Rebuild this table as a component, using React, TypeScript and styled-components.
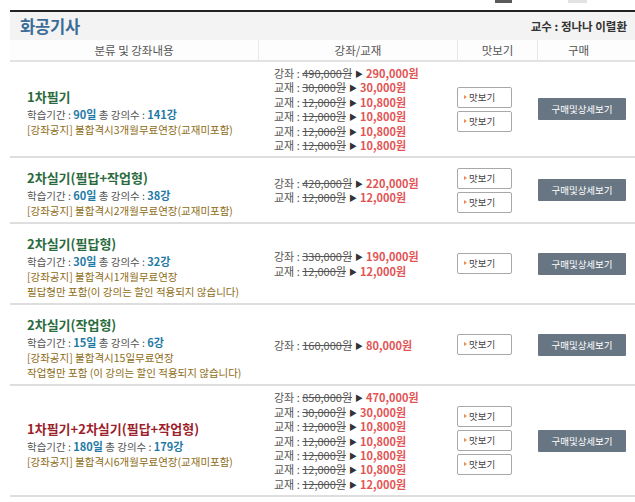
import React from "react";
import styled, { createGlobalStyle } from "styled-components";

const GlobalStyle = createGlobalStyle`
  html, body { margin: 0; padding: 0; background: #fff; }
  body { font-family: "Noto Sans CJK KR", "Noto Sans", sans-serif; }
  * { box-sizing: border-box; }
`;

const COLS = "248px 199px 80px 98px";

const Page = styled.div`
  width: 635px;
  padding-left: 10px;
`;

const TopStrip = styled.div`
  height: 10px;
  display: flex;
  align-items: flex-start;
`;

const TabStub = styled.div<{ $dark?: boolean; $left: number; $w: number }>`
  margin-left: ${(p) => p.$left}px;
  width: ${(p) => p.$w}px;
  height: 3px;
  background: ${(p) => (p.$dark ? "#5a5a5a" : "#e2e2e2")};
`;

const TitleBand = styled.div`
  border-top: 2px solid #222;
  background: #f3f3f3;
  height: 30px;
  display: flex;
  align-items: center;
  justify-content: space-between;
  padding: 0 8px 0 10px;
`;

const Title = styled.h1`
  margin: 0;
  font-size: 16.5px;
  font-weight: 700;
  color: #3b6c98;
  letter-spacing: -0.2px;
`;

const Prof = styled.div`
  font-size: 11.5px;
  font-weight: 700;
  color: #333;
`;

const HeaderRow = styled.div`
  display: grid;
  grid-template-columns: ${COLS};
  height: 22px;
  border-bottom: 2px solid #e3e3e3;
  background: #fdfdfd;
`;

const HeaderCell = styled.div<{ $first?: boolean; $padRight?: number }>`
  display: flex;
  align-items: center;
  justify-content: center;
  font-size: 11.5px;
  color: #555;
  padding-right: ${(p) => p.$padRight ?? 0}px;
  border-left: ${(p) => (p.$first ? "none" : "1px solid #e8e8e8")};
`;

const Row = styled.div`
  display: grid;
  grid-template-columns: ${COLS};
  border-bottom: 2px solid #dedede;
`;

const InfoCell = styled.div`
  display: flex;
  flex-direction: column;
  justify-content: center;
  padding: 10px 0 4px 17px;
`;

const CourseTitle = styled.div<{ $color: string }>`
  font-size: 13px;
  font-weight: 700;
  height: 20px;
  line-height: 20px;
  color: ${(p) => p.$color};
  white-space: nowrap;
`;

const InfoLine = styled.div`
  font-size: 10.5px;
  height: 15px;
  line-height: 15px;
  color: #555;
  white-space: nowrap;
`;

const NoticeLine = styled(InfoLine)`
  color: #8e6c16;
`;

const Value = styled.b`
  color: #1f7aa6;
  font-size: 11px;
  line-height: 0;
`;

const PriceCell = styled.div`
  display: flex;
  flex-direction: column;
  justify-content: center;
  padding: 4px 0 4px 16px;
`;

const PriceLine = styled.div`
  font-size: 11px;
  height: 14.4px;
  line-height: 14.4px;
  color: #555;
  white-space: nowrap;
`;

const OldPrice = styled.span`
  text-decoration: line-through;
  color: #555;
`;

const Arrow = styled.span`
  color: #333;
  font-size: 8px;
  line-height: 0;
  margin: 0 3px;
  vertical-align: 1px;
`;

const NewPrice = styled.span`
  color: #e25454;
  font-weight: 700;
`;

const PreviewCell = styled.div`
  display: flex;
  flex-direction: column;
  justify-content: center;
  align-items: flex-start;
  gap: 3px;
`;

const PreviewButton = styled.button`
  width: 55px;
  height: 21px;
  border: 1px solid #a8a8a8;
  border-radius: 2px;
  background: #fff;
  padding: 0 0 1px 6px;
  display: flex;
  align-items: center;
  gap: 2px;
  font-family: inherit;
  font-size: 9.5px;
  color: #444;
  cursor: pointer;

  &::before {
    content: "";
    width: 0;
    height: 0;
    border-top: 2.5px solid transparent;
    border-bottom: 2.5px solid transparent;
    border-left: 3px solid #f0894f;
  }
`;

const BuyCell = styled.div`
  display: flex;
  align-items: center;
  padding-left: 1px;
`;

const BuyButton = styled.button`
  width: 88px;
  height: 22px;
  border: none;
  border-radius: 1px;
  background: #687684;
  color: #fff;
  font-family: inherit;
  font-size: 9.5px;
  cursor: pointer;
`;

type Price = [string, string, string];

type Course = {
  title: string;
  color: string;
  days: string;
  count: string;
  notice: string;
  extra?: string;
  prices: Price[];
  previews: number;
};

const book12: Price = ["교재", "12,000원", "10,800원"];

const courses: Course[] = [
  {
    title: "1차필기",
    color: "#2a6b3d",
    days: "90일",
    count: "141강",
    notice: "[강좌공지] 불합격시3개월무료연장(교재미포함)",
    prices: [["강좌", "490,000원", "290,000원"], ["교재", "30,000원", "30,000원"], book12, book12, book12, book12],
    previews: 2,
  },
  {
    title: "2차실기(필답+작업형)",
    color: "#2a6b3d",
    days: "60일",
    count: "38강",
    notice: "[강좌공지] 불합격시2개월무료연장(교재미포함)",
    prices: [["강좌", "420,000원", "220,000원"], ["교재", "12,000원", "12,000원"]],
    previews: 2,
  },
  {
    title: "2차실기(필답형)",
    color: "#2a6b3d",
    days: "30일",
    count: "32강",
    notice: "[강좌공지] 불합격시1개월무료연장",
    extra: "필답형만 포함(이 강의는 할인 적용되지 않습니다)",
    prices: [["강좌", "330,000원", "190,000원"], ["교재", "12,000원", "12,000원"]],
    previews: 1,
  },
  {
    title: "2차실기(작업형)",
    color: "#2a6b3d",
    days: "15일",
    count: "6강",
    notice: "[강좌공지] 불합격시15일무료연장",
    extra: "작업형만 포함 (이 강의는 할인 적용되지 않습니다)",
    prices: [["강좌", "160,000원", "80,000원"]],
    previews: 1,
  },
  {
    title: "1차필기+2차실기(필답+작업형)",
    color: "#9c1f2d",
    days: "180일",
    count: "179강",
    notice: "[강좌공지] 불합격시6개월무료연장(교재미포함)",
    prices: [
      ["강좌", "850,000원", "470,000원"],
      ["교재", "30,000원", "30,000원"],
      book12,
      book12,
      book12,
      book12,
      ["교재", "12,000원", "12,000원"],
    ],
    previews: 3,
  },
];

export default function App() {
  return (
    <>
      <GlobalStyle />
      <Page>
        <TopStrip>
          <TabStub $dark $left={485} $w={17} />
          <TabStub $left={56} $w={19} />
        </TopStrip>
        <TitleBand>
          <Title>화공기사</Title>
          <Prof>교수 : 정나나 이렬환</Prof>
        </TitleBand>
        <HeaderRow>
          <HeaderCell $first>분류 및 강좌내용</HeaderCell>
          <HeaderCell>강좌/교재</HeaderCell>
          <HeaderCell>맛보기</HeaderCell>
          <HeaderCell $padRight={16}>구매</HeaderCell>
        </HeaderRow>
        {courses.map((c, i) => (
          <Row key={i}>
            <InfoCell>
              <CourseTitle $color={c.color}>{c.title}</CourseTitle>
              <InfoLine>
                학습기간 : <Value>{c.days}</Value> 총 강의수 : <Value>{c.count}</Value>
              </InfoLine>
              <NoticeLine>{c.notice}</NoticeLine>
              {c.extra && <NoticeLine>{c.extra}</NoticeLine>}
            </InfoCell>
            <PriceCell>
              {c.prices.map((p, j) => (
                <PriceLine key={j}>
                  {p[0]} : <OldPrice>{p[1]}</OldPrice>
                  <Arrow>▶</Arrow>
                  <NewPrice>{p[2]}</NewPrice>
                </PriceLine>
              ))}
            </PriceCell>
            <PreviewCell>
              {Array.from({ length: c.previews }).map((_, k) => (
                <PreviewButton key={k}>맛보기</PreviewButton>
              ))}
            </PreviewCell>
            <BuyCell>
              <BuyButton>구매및상세보기</BuyButton>
            </BuyCell>
          </Row>
        ))}
      </Page>
    </>
  );
}
